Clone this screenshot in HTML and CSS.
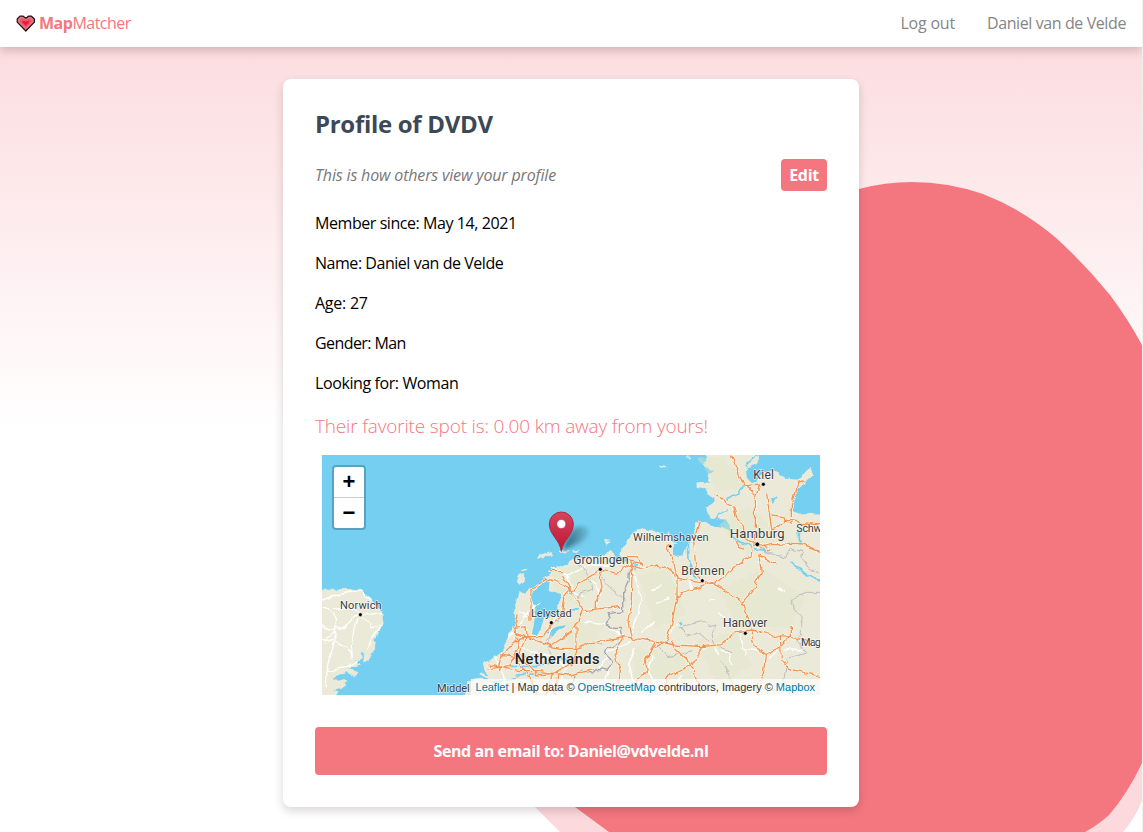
FILE: index.html
```html
<!DOCTYPE html>
<html lang="en">
<head>
<meta charset="utf-8">
<title>MapMatcher</title>
<link rel="stylesheet" href="styles.css">
</head>
<body>
<svg class="blob" viewBox="0 0 1143 832" aria-hidden="true">
  <path fill="#fbd9dd" d="M500 760 L535 807 L560 832 H1123 Q1134 820 1142 801 V700Z"/>
  <path fill="#f47780" d="M800 215 Q830 195 859 189 Q885 182 912 182 Q948 182 983 194 Q1022 209 1055 237 Q1084 263 1110 295 Q1128 319 1142 345 V763 Q1128 793 1109 815 Q1098 825 1085 832 H609 L575 807 L550 780Z"/>
</svg>
<header class="nav">
  <a class="brand">
    <svg class="heart" viewBox="0 0 19 17"><path d="M1.2 4 L4 1.2H7.2L9.8 3.2L12.4 1.2H15.4L18.4 4V7.2L9.8 16L1.2 7.2Z" fill="#ea7180" stroke="#1b1013" stroke-width="1.2" stroke-linejoin="round"/><path d="M4 5L6 3.6L9.8 5.2L13.4 3.6L15.4 5V7L9.8 12.8L4 7Z" fill="#ea5265"/><path d="M6.4 6H8.6L9.8 7L11 6H13V7.6L9.8 10.8L6.4 7.6Z" fill="#ef1832"/></svg>
    <span class="name"><b>Map</b>Matcher</span>
  </a>
  <nav class="links"><a class="logout">Log out</a><a class="user">Daniel van de Velde</a></nav>
</header>
<main class="card">
  <h1><span class="t-title">Profile of DVDV</span></h1>
  <div class="intro"><em class="t-intro">This is how others view your profile</em><a class="edit">Edit</a></div>
  <p><span class="t-member">Member since: May 14, 2021</span></p>
  <p><span class="t-name">Name: Daniel van de Velde</span></p>
  <p><span class="t-age">Age: 27</span></p>
  <p><span class="t-gender">Gender: Man</span></p>
  <p><span class="t-look">Looking for: Woman</span></p>
  <h2><span class="t-spot">Their favorite spot is: 0.00 km away from yours!</span></h2>
  <div class="map">
    <svg class="tiles" viewBox="0 0 1494 720">
      <defs>
        <linearGradient id="pin" x2="0" y2="1"><stop offset="0" stop-color="#d64560"/><stop offset="1" stop-color="#bd1431"/></linearGradient>
        <linearGradient id="shade" x1="0" x2="1"><stop offset="0" stop-color="#183d4c" stop-opacity=".75"/><stop offset="1" stop-color="#183d4c" stop-opacity=".1"/></linearGradient>
        <filter id="soft"><feGaussianBlur stdDeviation="6"/></filter>
        <filter id="wiggle" filterUnits="userSpaceOnUse" x="-20" y="-20" width="1540" height="760"><feTurbulence type="fractalNoise" baseFrequency=".035" numOctaves="2" seed="4"/><feDisplacementMap in="SourceGraphic" scale="20" xChannelSelector="R" yChannelSelector="G"/></filter>
        <path id="roads" d="M504 640 L560 635 L590 580 L575 520 L585 480 M575 520 L612 515 L615 545 L590 550 M612 545 L665 545 L690 505 M580 535 L625 550 L680 570 L710 580 H765 L805 560 L865 552 L905 545 L1000 560 M627 500 V405 L675 370 L720 390 L748 405 L785 465 L765 510 L750 530 L690 570 M680 350 H722 M725 360 L750 410 L770 385 L835 345 L885 355 L925 330 L955 340 L1000 332 M750 400 L725 430 L715 490 L688 510 M842 345 L835 370 L840 400 L820 440 V460 M790 466 L895 454 M915 305 H945 L962 325 L920 318 L930 360 L928 430 L918 500 L928 545 M535 600 L600 610 L645 660 L700 655 M590 550 L540 600 L530 650 M610 545 L585 625 L620 660 L645 720 M504 630 L590 650 L650 650 L740 660 L820 640 M765 580 L755 620 L690 660 L670 720 M904 545 L880 590 L895 650 L885 720 M1000 570 L970 615 L975 650 L940 685 M762 510 V578 M960 630 L1000 560 M700 720 L710 660 M999 330 L1030 335 L1070 370 L1125 382 L1180 385 L1230 345 Q1260 315 1290 305 L1300 250 V120 L1265 90 L1225 0 M1273 95 L1313 90 L1300 120 M1175 120 L1202 130 L1212 152 L1235 160 L1245 190 L1265 215 V245 L1300 270 M1132 200 L1126 222 L1115 260 L1120 320 L1130 370 M1040 270 L1035 285 L1055 320 L1065 370 L1065 425 L1048 510 L1030 560 L1000 580 M1065 425 L1110 405 L1170 383 L1210 405 L1260 440 L1295 400 L1318 350 L1310 300 L1360 330 M1334 120 L1350 230 L1390 195 L1494 210 M1350 180 L1385 185 L1405 205 M1408 185 V150 L1430 85 L1447 78 M1300 275 L1350 265 L1440 270 L1494 290 M1240 260 L1250 278 L1265 282 M1320 270 L1335 285 L1350 287 M1260 440 L1280 500 L1290 530 L1300 575 L1330 600 L1324 655 L1305 690 V720 M1000 558 L1055 570 L1145 575 L1200 568 L1240 530 L1290 525 L1375 545 L1430 550 L1465 570 M1045 555 L1055 578 L1105 630 L1130 690 L1125 720 M1145 570 L1110 630 L1030 670 L1035 720 M1375 545 L1378 610 L1400 640 L1494 665 M1405 515 V545 L1370 580 L1330 598"/>
      </defs>
      <rect width="1494" height="720" fill="#75cff0"/>
      <g filter="url(#wiggle)">
      <!-- England -->
      <g>
        <path class="land" d="M-20 415 L10 402 L85 404 L118 408 L150 435 L176 470 L181 510 L160 555 L157 588 L125 622 L128 595 L118 590 L121 613 L96 612 L115 628 L76 638 L105 652 L100 664 L72 650 L50 660 L35 678 L68 677 L63 700 L30 705 L48 713 L30 740 H-20Z"/>
        <path class="minor" d="M-10 440 Q50 412 118 408 L150 435 M-10 458 Q30 462 38 480 Q35 500 40 522 L10 562 M-10 548 Q90 570 91 610 M-10 510 L40 522 Q75 520 90 490 L115 478 L176 476 M115 478 Q95 510 97 550 Q86 580 91 610 M115 478 L150 515 L180 510 M40 522 L37 562 L12 650 L10 690 M12 650 Q80 640 110 615 M180 510 Q155 545 135 585 M38 460 Q80 450 115 478"/>
      </g>
      <!-- Netherlands and Germany -->
      <g>
        <path class="land" d="M504 617 L540 588 L562 548 L580 500 L578 450 L588 405 L606 418 L624 403 L680 365 Q700 340 745 320 L800 302 L835 305 L865 288 L878 298 L872 320 L888 325 L922 318 L900 294 L904 272 L920 255 L938 230 L970 222 L1020 238 L1040 230 L1050 262 L1065 265 L1073 280 L1060 300 L1085 300 L1096 260 L1117 250 L1120 206 L1138 202 L1170 211 L1228 230 L1240 260 L1268 270 L1240 245 L1225 210 L1208 192 L1166 190 L1152 175 L1152 155 L1178 143 L1160 120 L1160 100 L1125 95 L1125 80 L1165 85 L1158 60 L1178 45 L1144 30 L1160 5 L1145 -20 H1308 L1310 20 L1270 38 L1273 65 L1296 90 L1326 55 L1364 51 L1392 75 L1430 78 L1452 50 L1472 40 L1471 62 L1447 85 L1424 105 L1408 140 L1411 165 L1432 180 L1515 175 V740 H430 L440 680 L475 675 L515 680 L470 660 L478 654 L505 665 L482 625 L495 620Z"/>
        <path class="land" d="M645 310 L660 298 L690 290 L688 297Z M710 288 L742 287 L720 293Z M752 287 L771 286 L760 291Z M598 347 L616 339 L612 345Z M848 256 L861 258 L855 266Z M583 383 L590 362 L608 355 L607 380 L590 392Z M1016 33 L1030 37 L1018 41Z M1096 0 L1104 14 L1110 12Z"/>
        <path class="forest" d="M690 350 L760 330 L820 370 L780 450 L700 430Z M1130 10 L1210 10 L1270 90 L1190 110Z M950 360 L1040 340 L1090 480 L1000 520Z M1190 400 L1330 340 L1450 430 L1400 520 L1240 510Z M1120 560 L1240 530 L1290 630 L1190 700Z M730 500 L850 500 L810 590 L740 610Z M940 580 L1080 600 L1120 700 L930 690Z M1190 210 L1280 150 L1400 250 L1280 300Z"/>
        <path class="water" d="M632 408 L684 368 L680 405 L722 418 L707 450 L704 480 L666 488 L650 542 L630 538 L640 480 L632 440Z M1050 270 L1080 262 L1077 295 L1052 302Z M928 320 L950 325 L940 345 L925 335Z M1350 130 L1368 127 L1355 148Z M665 535 L704 515 L730 510 L690 542Z M745 462 L765 456 L770 466Z M700 495 L713 499 L706 506Z M1075 498 H1084 V507 H1075Z M740 410 L745 405 L760 413 L750 421Z"/>
        <path class="river" d="M1096 260 L1098 318 L1110 340 L1120 365 M1228 235 L1240 256 L1280 270 L1295 280 L1340 289 M1308 0 L1270 35 M1215 132 L1250 115 L1262 92 M1410 325 L1455 360 L1510 385 M1432 220 V268 M565 634 L640 635 L700 620 M580 660 L670 655 M510 680 L580 668 M710 608 L740 625 M1180 195 L1210 165"/>
        <path class="minor" d="M690 340 L745 360 L800 330 L875 330 M735 360 L750 400 L790 430 M560 550 L590 510 L650 440 M600 580 L690 605 L735 640 L700 720 M790 500 L850 510 L905 545 M830 640 L860 590 L930 560 M870 620 L850 680 M935 350 L960 440 L925 540 M960 530 L1000 500 M1080 660 L1050 700 M940 580 L920 630 L930 690 M990 600 L980 650 L1000 690 M790 370 L820 390 L835 420 M1070 500 L1040 540 M1230 630 L1220 590 L1195 585 M1190 470 L1208 490 M1370 400 L1385 410 M1165 435 L1180 437 M1100 380 L1110 400 M1005 445 L1040 430 M1250 520 L1270 600 M1370 590 L1340 610 M1320 590 L1260 580 M1190 600 L1170 570 M1390 580 L1440 585 M620 490 L590 470 M730 480 L690 500 L680 550 M1020 390 L990 410 M520 600 L560 700 M1310 320 L1320 345"/>
        <path class="border" d="M925 318 L920 375 L905 408 V470 L855 476 L866 490 L852 510 L880 520 L897 520 L903 553 L880 570 L860 580 L853 600 L872 620 L860 640 L840 635 L815 655 L780 645 L755 660 V705"/>
        <path class="region" d="M770 328 L793 355 L810 402 L775 415 L765 440 L785 465 M690 600 L670 560 L690 535 M770 580 L810 555 L840 570 M690 690 L685 660 L720 640 M1310 270 L1325 290 L1385 305 L1405 280 L1440 290 L1450 335 L1490 350 M1411 430 L1450 415 H1510 M1411 430 L1420 465 L1436 480 L1440 520 L1425 560 L1455 595 L1395 610 L1385 680 L1405 720 M1075 515 L1140 500 L1160 515 L1188 510 L1170 540 L1180 570 L1230 590 M1078 515 L1095 545 L1130 532 L1160 560 M1000 560 L1040 605 L1110 590 M1200 620 L1233 680 L1227 720 M585 540 L590 595 L610 610 M840 370 L900 430"/>
        <use href="#roads" class="road-c"/>
        <use href="#roads" class="road"/>
      </g>
      </g>
      <g class="dots"><circle cx="115" cy="479" r="6"/><circle cx="688" cy="503" r="6"/><circle cx="835" cy="343" r="6"/><circle cx="1045" cy="274" r="5"/><circle cx="1141" cy="377" r="6"/><circle cx="1306" cy="268" r="7"/><circle cx="1324" cy="88" r="6"/><circle cx="1270" cy="535" r="6"/></g>
      <g class="labels">
        <text x="54" y="461" textLength="125">Norwich</text>
        <text x="627" y="487" textLength="122">Lelystad</text>
        <text x="754" y="326" textLength="166" font-size="36">Groningen</text>
        <text x="933" y="257" textLength="227">Wilhelmshaven</text>
        <text x="1078" y="359" textLength="130" font-size="36">Bremen</text>
        <text x="1223" y="248" textLength="165" font-size="39">Hamburg</text>
        <text x="1294" y="71" textLength="62" font-size="36">Kiel</text>
        <text x="1203" y="517" textLength="133" font-size="36">Hanover</text>
        <text x="1423" y="230" textLength="76">Schw</text>
        <text x="1437" y="572" textLength="60">Mag</text>
        <text x="345" y="711" textLength="98">Middel</text>
        <text class="country" x="578" y="627" textLength="255">Netherlands</text>
      </g>
      <path d="M722 286 Q735 240 757 221 Q785 205 802 230 Q790 260 757 270Z" fill="url(#shade)" filter="url(#soft)"/>
      <path d="M718 289 C713 253 682 240 682 207 A36 36 0 0 1 754 207 C754 240 724 253 718 289Z" fill="url(#pin)" stroke="#ad2941" stroke-width="3"/>
      <circle cx="718" cy="207" r="13.5" fill="#fff" stroke="#a32139" stroke-width="1.5"/>
    </svg>
    <div class="zoom"><a>+</a><a>−</a></div>
    <div class="credit"><a>Leaflet</a> | Map data © <a>OpenStreetMap</a> contributors, Imagery © <a>Mapbox</a></div>
  </div>
  <a class="send">Send an email to: Daniel@vdvelde.nl</a>
</main>
</body>
</html>
```
FILE: styles.css
```css
* { box-sizing: border-box; }
body { margin: 0; height: 832px; overflow: hidden; font: 16px/24px "Open Sans", "Noto Sans", sans-serif; color: #000; background: linear-gradient(#fcdde0 47px, #fde9eb 190px, #fff 430px); border-right: 1px solid #f1f1f1; }
.blob { position: absolute; left: 0; top: 0; width: 1143px; height: 832px; z-index: -1; clip-path: inset(0 1px 0 0); }
.nav { height: 47px; padding: 0 16px 1px; display: flex; align-items: center; justify-content: space-between; background: #fff; box-shadow: 0 4px 9px rgba(60,20,30,.2); }
.brand { display: flex; align-items: center; gap: 4px; color: #f47780; }
.heart { width: 19px; height: 17px; }
.name { letter-spacing: -.5px; }
.links { display: flex; gap: 32px; color: #858585; }
.logout { letter-spacing: -.2px; }
.user { letter-spacing: -.4px; }
.card { width: 576px; height: 728px; margin: 32px 0 0 283px; padding: 31px 32px 32px; background: #fff; border-radius: 8px; box-shadow: 0 4px 10px rgba(30,10,20,.17); }
h1 { margin: 0; height: 28px; font: 700 24px/28px "Open Sans", sans-serif; letter-spacing: -.3px; color: #3d4856; }
.intro { height: 32px; margin: 21px 0 20px; display: flex; align-items: center; justify-content: space-between; color: #777; }
.t-intro { letter-spacing: -.16px; }
.edit { width: 46px; height: 32px; background: #f47780; border-radius: 4px; color: #fff; font-weight: 700; line-height: 32px; text-align: center; letter-spacing: -.3px; }
p { margin: 0 0 16px; height: 24px; }
.t-member { letter-spacing: -.43px; }
.t-name { letter-spacing: -.46px; }
.t-age { letter-spacing: -.25px; }
.t-gender { letter-spacing: -.58px; }
.t-look { letter-spacing: -.4px; }
h2 { margin: 0; height: 44px; font: 300 19px/30px "Open Sans", sans-serif; letter-spacing: -.165px; color: #f47780; }
h1, p, h2, a, .intro em { white-space: nowrap; }
.map { position: relative; width: 498px; height: 240px; margin-left: 7px; overflow: hidden; }
.tiles { display: block; width: 498px; height: 240px; }
.land { fill: #ebead9; stroke: #f3efe0; stroke-width: 2; }
.forest { fill: #e2e6c5; opacity: .4; }
.water { fill: #75cff0; }
.river, .minor, .border, .region, .road, .road-c { fill: none; stroke-linejoin: round; stroke-linecap: round; }
.river { stroke: #75cff0; stroke-width: 5; }
.minor { stroke: #fff; stroke-width: 4; }
.border { stroke: #a3a3b0; stroke-width: 4; }
.region { stroke: #bcbcc2; stroke-width: 3; }
.road-c { stroke: #fff6e8; stroke-width: 8; }
.road { stroke: #f19452; stroke-width: 4; }
.labels { font: 400 33px Roboto, sans-serif; fill: #3c3c42; stroke: #fff; stroke-opacity: .7; stroke-width: 4px; paint-order: stroke; }
.labels text { stroke-linejoin: round; }
.labels .country { font-size: 44px; font-weight: 500; fill: #1d1d22; }
.dots { fill: #000; stroke: #fff; stroke-width: 2; }
.zoom { position: absolute; left: 10px; top: 10px; width: 34px; border: 2px solid #5aa2bd; border-radius: 4px; background: #fff; overflow: hidden; }
.zoom a { display: block; height: 30px; font: bold 22px/30px "Liberation Sans", sans-serif; text-align: center; }
.zoom a + a { border-top: 1px solid #ccc; height: 31px; }
.credit { position: absolute; right: 0; bottom: 0; height: 16px; padding: 0 5px; background: rgba(255,255,255,.7); font: 11px/16px "Liberation Sans", sans-serif; color: #333; white-space: nowrap; }
.credit a { color: #0078a8; }
.send { display: block; height: 48px; margin-top: 32px; border-radius: 4px; background: #f47780; color: #fff; font-weight: 700; line-height: 48px; text-align: center; letter-spacing: -.42px; }
```
